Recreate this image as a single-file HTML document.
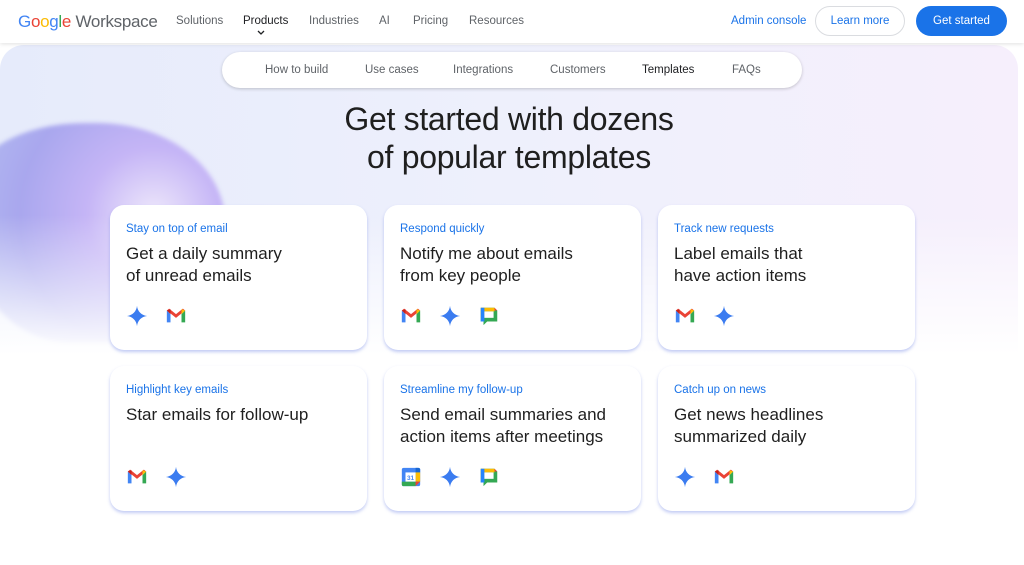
<!DOCTYPE html>
<html><head><meta charset="utf-8"><style>
*{margin:0;padding:0;box-sizing:border-box}
body{width:1024px;height:529px;overflow:hidden;background:#fff;font-family:"Liberation Sans",Arial,sans-serif;position:relative;color:#1f1f1f}
.hdr{position:absolute;left:0;top:0;width:1024px;height:43px;background:#fff;box-shadow:0 1px 4px rgba(0,0,0,.12);z-index:5}
.logo{position:absolute;left:18px;top:12px;font-size:17px;letter-spacing:-.3px}
.nav{position:absolute;top:15px;font-size:11.5px;color:#5f6368}
.panel{position:absolute;left:0;top:45px;width:1018px;height:520px;border-radius:24px 24px 0 0;background:linear-gradient(90deg,#e6ebfb 0%,#eef0fc 50%,#f6effc 100%);overflow:hidden}
.fade{position:absolute;left:0;top:170px;width:100%;height:360px;background:linear-gradient(180deg,rgba(255,255,255,0),#fff 140px)}
.blob{position:absolute;left:-30px;top:78px;width:255px;height:220px;background:radial-gradient(circle at 72% 42%,#eee8fb 0%,#c5b5f6 30%,#a9a7ee 60%,#b6c3f2 100%);border-radius:45% 50% 40% 40%/30% 45% 50% 50%;filter:blur(2px)}
.sub{position:absolute;left:222px;top:52px;width:580px;height:36px;background:#fff;border-radius:18px;box-shadow:0 1px 3px rgba(0,0,0,.2);z-index:3;font-size:11.5px;color:#5f6368}
.sub span{position:absolute;top:12px}
h1{position:absolute;left:0;width:1018px;top:100px;text-align:center;font-weight:400;font-size:32px;line-height:38px;color:#1f1f1f;z-index:3;letter-spacing:-.3px}
.card{position:absolute;width:257px;height:145px;background:#fff;border-radius:14px;box-shadow:0 2px 3px rgba(120,140,230,.45);z-index:3}
.card .k{position:absolute;left:16px;top:18px;font-size:11.5px;color:#1a73e8}
.card .t{position:absolute;left:16px;top:38px;font-size:17px;line-height:22px;color:#1f1f1f}
.card .ic{position:absolute;left:16px;top:100px;display:flex;gap:17px}
.ic svg{width:22px;height:22px}
</style></head><body>
<div class="panel"><div class="blob"></div><div class="fade"></div></div>
<div class="hdr">
<div class="logo"><span style="color:#4285f4">G</span><span style="color:#ea4335">o</span><span style="color:#fbbc04">o</span><span style="color:#4285f4">g</span><span style="color:#34a853">l</span><span style="color:#ea4335">e</span> <span style="color:#5f6368">Workspace</span></div>
<span class="nav" style="left:176px">Solutions</span>
<span class="nav" style="left:243px;color:#202124">Products</span>
<svg style="position:absolute;left:257px;top:30px" width="8" height="6"><path d="M1 1l3 3 3-3" stroke="#202124" stroke-width="1.3" fill="none"/></svg>
<span class="nav" style="left:309px">Industries</span>
<span class="nav" style="left:379px">AI</span>
<span class="nav" style="left:413px">Pricing</span>
<span class="nav" style="left:469px">Resources</span>
<span class="nav" style="left:731px;color:#1a73e8">Admin console</span>
<div style="position:absolute;left:815px;top:6px;width:90px;height:30px;border:1px solid #dadce0;border-radius:15px;font-size:11.5px;color:#1a73e8;text-align:center;line-height:28px">Learn more</div>
<div style="position:absolute;left:916px;top:6px;width:91px;height:30px;background:#1a73e8;border-radius:15px;font-size:11.5px;color:#fff;text-align:center;line-height:30px">Get started</div>
</div>
<div class="sub">
<span style="left:43px">How to build</span><span style="left:143px">Use cases</span><span style="left:231px">Integrations</span><span style="left:328px">Customers</span><span style="left:420px;color:#202124">Templates</span><span style="left:510px">FAQs</span>
</div>
<h1>Get started with dozens<br>of popular templates</h1>

<svg width="0" height="0" style="position:absolute"><defs>
<symbol id="gem" viewBox="0 0 24 24"><path d="M12 1C12.6 7 17 11.4 23 12 17 12.6 12.6 17 12 23 11.4 17 7 12.6 1 12 7 11.4 11.4 7 12 1Z" fill="#3b7cf0"/></symbol>
<symbol id="gm" viewBox="0 0 24 24"><path d="M2 6v13h4V10z" fill="#4285f4"/><path d="M18 10v9h4V6z" fill="#34a853"/><path d="M2 6l10 8 10-8-2.5-2L12 10 4.5 4z" fill="#ea4335"/><path d="M18 4.5V10l4-4z" fill="#fbbc04"/><path d="M2 6l4 4V4.5z" fill="#c5221f"/></symbol>
<symbol id="ch" viewBox="0 0 24 24"><path d="M3 3h15l3 3v12H10l-4 4v-4H3z" fill="#34a853"/><path d="M3 3h15v4H7v7H3z" fill="#fbbc04"/><path d="M3 3h4v15H3z" fill="#2684fc"/><path d="M18 3l3 3h-3z" fill="#ea4335"/><rect x="7" y="7" width="10" height="7" fill="#fff"/></symbol>
<symbol id="cal" viewBox="0 0 24 24"><rect x="2" y="2" width="20" height="20" rx="2" fill="#4285f4"/><path d="M17 2h3a2 2 0 012 2v3h-5z" fill="#1967d2"/><path d="M17 7h5v10h-5z" fill="#fbbc04"/><path d="M2 17h15v5H4a2 2 0 01-2-2z" fill="#34a853"/><path d="M17 17h5l-5 5z" fill="#ea4335"/><rect x="6" y="7" width="11" height="10" fill="#fff"/><text x="11.5" y="15.5" font-size="7" font-family="Liberation Sans" font-weight="bold" fill="#4285f4" text-anchor="middle">31</text></symbol>
</defs></svg>

<div class="card" style="left:110px;top:205px"><div class="k">Stay on top of email</div><div class="t">Get a daily summary<br>of unread emails</div><div class="ic"><svg><use href="#gem"/></svg><svg><use href="#gm"/></svg></div></div>
<div class="card" style="left:384px;top:205px"><div class="k">Respond quickly</div><div class="t">Notify me about emails<br>from key people</div><div class="ic"><svg><use href="#gm"/></svg><svg><use href="#gem"/></svg><svg><use href="#ch"/></svg></div></div>
<div class="card" style="left:658px;top:205px"><div class="k">Track new requests</div><div class="t">Label emails that<br>have action items</div><div class="ic"><svg><use href="#gm"/></svg><svg><use href="#gem"/></svg></div></div>
<div class="card" style="left:110px;top:366px"><div class="k">Highlight key emails</div><div class="t">Star emails for follow-up</div><div class="ic"><svg><use href="#gm"/></svg><svg><use href="#gem"/></svg></div></div>
<div class="card" style="left:384px;top:366px"><div class="k">Streamline my follow-up</div><div class="t">Send email summaries and<br>action items after meetings</div><div class="ic"><svg><use href="#cal"/></svg><svg><use href="#gem"/></svg><svg><use href="#ch"/></svg></div></div>
<div class="card" style="left:658px;top:366px"><div class="k">Catch up on news</div><div class="t">Get news headlines<br>summarized daily</div><div class="ic"><svg><use href="#gem"/></svg><svg><use href="#gm"/></svg></div></div>
</body></html>
